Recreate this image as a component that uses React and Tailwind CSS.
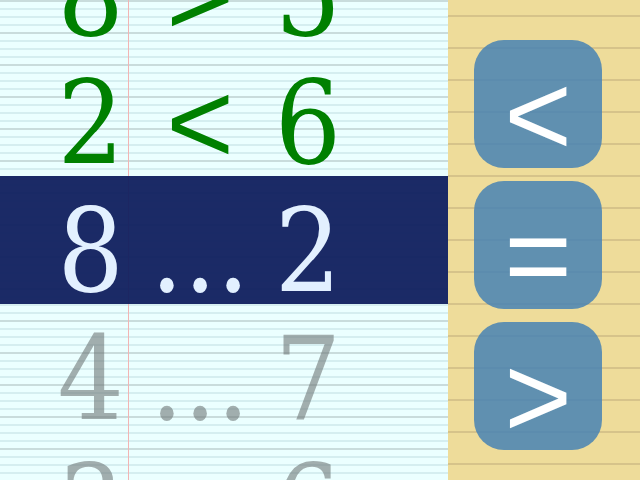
const rows = [
  { a: "8", op: ">", b: "5", state: "done" },
  { a: "2", op: "<", b: "6", state: "done" },
  { a: "8", op: "...", b: "2", state: "active" },
  { a: "4", op: "...", b: "7", state: "todo" },
  { a: "3", op: "...", b: "6", state: "todo" },
];

function Row({ a, op, b, state }) {
  const tone =
    state === "done"
      ? "text-[#008000]"
      : state === "active"
      ? "bg-[#101f5e]/95 text-[#e2f0ff]"
      : "text-[#707878]/60";
  return (
    <div className={`flex h-[128px] shrink-0 text-[116px] leading-[150px] ${tone}`}>
      <div className="w-[128px] pr-[4px] text-right">{a}</div>
      <div className="w-[144px] text-center">
        {op === "..." ? op : <span className="font-['Liberation_Sans',sans-serif]">{op}</span>}
      </div>
      <div className="w-[72px] text-center">{b}</div>
    </div>
  );
}

function Key({ children }) {
  return (
    <button className="flex h-[128px] w-[128px] items-start justify-center rounded-[30px] bg-[#4682b4]/85 text-[116px] leading-[150px] text-white">
      <span className="font-['Liberation_Sans',sans-serif]">{children}</span>
    </button>
  );
}

export default function App() {
  return (
    <div className="flex h-[480px] w-[640px] overflow-hidden font-['DejaVu_Serif_Condensed','DejaVu_Serif',serif] font-stretch-condensed">
      {/* exercise sheet */}
      <div className="w-[448px] overflow-hidden bg-[#ebffff] bg-[image:linear-gradient(to_right,transparent_128px,#f2b4b4_128px,#f2b4b4_129px,transparent_129px),repeating-linear-gradient(to_bottom,#c9dcdc_0px,#c9dcdc_2px,transparent_2px,transparent_32px),repeating-linear-gradient(to_bottom,#d5eef0_0px,#d5eef0_2px,transparent_2px,transparent_8px)]">
        <div className="-mt-[80px] flex flex-col">
          {rows.map((r, i) => (
            <Row key={i} {...r} />
          ))}
        </div>
      </div>

      {/* answer keys */}
      <div className="flex w-[192px] flex-col gap-[13px] bg-[#eedc9a] bg-[image:repeating-linear-gradient(to_bottom,transparent_0px,transparent_15px,#d6c38a_15px,#d6c38a_17px,transparent_17px,transparent_32px)] pl-[26px] pt-[40px]">
        <Key>&lt;</Key>
        <Key>=</Key>
        <Key>&gt;</Key>
      </div>
    </div>
  );
}
